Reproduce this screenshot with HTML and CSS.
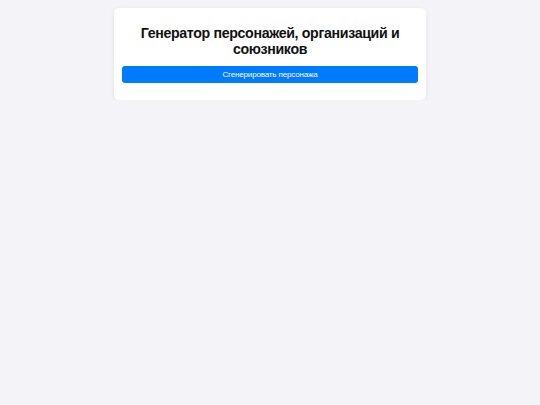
FILE: index.html
```html
<!DOCTYPE html>
<html lang="ru">
<head>
<meta charset="utf-8">
<title>Генератор</title>
<link rel="stylesheet" href="styles.css">
</head>
<body>
<div class="card">
  <h1 class="title">Генератор персонажей, организаций и союзников</h1>
  <button class="btn">Сгенерировать персонажа</button>
</div>
</body>
</html>
```
FILE: styles.css
```css
html, body { margin: 0; padding: 0; }
body {
  background: #f4f4f8;
  font-family: "Liberation Sans", Arial, sans-serif;
  padding-top: 8px;
}
.card {
  width: 296px;
  margin: 0 auto;
  background: #fff;
  border-radius: 5px;
  padding: 8px 8px 17px;
  box-shadow: 0 1px 4px rgba(0,0,0,0.08);
}
.title {
  font-size: 14.2px;
  line-height: 16px;
  font-weight: bold;
  text-align: center;
  letter-spacing: -0.35px;
  margin: 9px 0 9px;
  color: #111;
}
.btn {
  display: block;
  width: 100%;
  height: 17px;
  border: none;
  border-radius: 3px;
  background: #007bff;
  color: #fff;
  font-family: "Liberation Sans", Arial, sans-serif;
  font-size: 8px;
  letter-spacing: -0.15px;
  padding: 0;
}
```
